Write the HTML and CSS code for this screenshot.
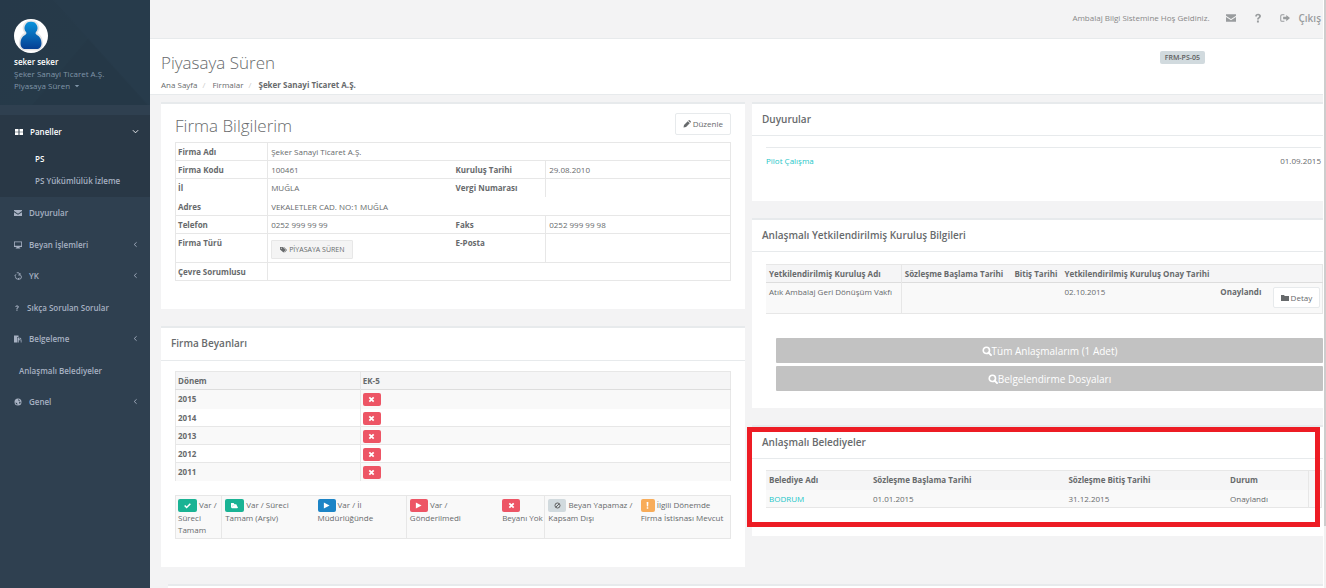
FILE: index.html
```html
<!DOCTYPE html>
<html lang="tr">
<head>
<meta charset="utf-8">
<title>Ambalaj Bilgi Sistemi - Piyasaya Süren</title>
<link rel="stylesheet" href="styles.css">
</head>
<body>
<svg class="sprite" aria-hidden="true">
  <symbol id="i-mail" viewBox="0 0 16 16"><path d="M0 2h16v2.200L8 9.500 0 4.200zM0 6.500l8 5.200 8-5.200V14H0z"/></symbol>
  <symbol id="i-help" viewBox="0 0 16 16"><path d="M3.500 5.500C3.500 2.500 5.300 1 8.200 1c2.700 0 4.600 1.600 4.600 3.900 0 3.300-3.500 3.300-3.500 5.600H6.400c0-3.500 3.300-3.700 3.300-5.400 0-.9-.6-1.500-1.600-1.500-1.200 0-1.700.8-1.800 1.900zM6.300 12h3.100v3H6.300z"/></symbol>
  <symbol id="i-out" viewBox="0 0 16 16"><path d="M7 2v1.600H3.500Q2 3.600 2 5v6q0 1.400 1.500 1.400H7V14H3Q.4 14 .4 11.400V4.600Q.4 2 3 2zM10 3l6 5-6 5v-3H5V6h5z"/></symbol>
  <symbol id="i-grid" viewBox="0 0 16 16"><path d="M0 2h7v5.500H0zM9 2h7v5.500H9zM0 8.500h7V14H0zM9 8.500h7V14H9z"/></symbol>
  <symbol id="i-screen" viewBox="0 0 16 16"><path d="M0 1h16v11h-5v1.500h1.500V15h-9v-1.500H5V12H0zM1.600 2.600v6.800h12.800V2.600z" fill-rule="evenodd"/></symbol>
  <symbol id="i-recycle" viewBox="0 0 16 16"><path d="M5.500 1.500h4l2 3.500M4 4.500 1.500 8l2 .5M8 14.500 4 13 3 9.500M9 14h4l2-4-2-4M12 2v4H8.500M10.500 11.500 8 14l2.500 1.500" fill="none" stroke="currentColor" stroke-width="1.700"/></symbol>
  <symbol id="i-paste" viewBox="0 0 16 16"><path d="M0 1h9v3H6v11H0zM7 5h4v4h4v6h-1.500v-4.500H9.500V15H7zM12 5l3 3h-3z"/></symbol>
  <symbol id="i-globe" viewBox="0 0 16 16"><path d="M8 1a7 7 0 1 0 0 14A7 7 0 0 0 8 1zM9 2.500 12 5l-2 1-2-2zM11 7l2.500 1-1.500 4-2-2zM3 9l3 1 1 3.500L4 12z" fill-rule="evenodd"/></symbol>
  <symbol id="i-left" viewBox="0 0 16 16"><path d="M10.500 3 5 8l5.500 5" fill="none" stroke="currentColor" stroke-width="2"/></symbol>
  <symbol id="i-down" viewBox="0 0 16 16"><path d="m2 5 6 6 6-6" fill="none" stroke="currentColor" stroke-width="2"/></symbol>
  <symbol id="i-caret" viewBox="0 0 16 16"><path d="M2 5h12l-6 6z"/></symbol>
  <symbol id="i-pencil" viewBox="0 0 16 16"><path d="m1 15 1-5L9.500 2.500l4 4L6 14zM10.500 1.500 12 0q1 0 2.500 1.500T16 4l-1.500 1.500z"/></symbol>
  <symbol id="i-tags" viewBox="0 0 16 16"><path d="M0 2h6l7 7-5 6-8-7zM7.500 2H9l7 7-5 6-1-1 4-5zM2 4v2h2V4z" fill-rule="evenodd"/></symbol>
  <symbol id="i-folder" viewBox="0 0 16 16"><path d="M0 2h6l1.500 2H16v10H0z"/></symbol>
  <symbol id="i-search" viewBox="0 0 16 16"><circle cx="7" cy="7" r="5" fill="none" stroke="currentColor" stroke-width="2.600"/><path d="m10.500 10.500 4 4" stroke="currentColor" stroke-width="3" stroke-linecap="round"/></symbol>
  <symbol id="i-x" viewBox="0 0 16 16"><path d="m3 3 10 10M13 3 3 13" stroke="currentColor" stroke-width="4"/></symbol>
  <symbol id="i-check" viewBox="0 0 16 16"><path d="m1.500 8 4.500 4.500L14.500 4" fill="none" stroke="currentColor" stroke-width="3.500"/></symbol>
  <symbol id="i-play" viewBox="0 0 16 16"><path d="m2 1 13 7-13 7z"/></symbol>
  <symbol id="i-open" viewBox="0 0 16 16"><path d="M0 2h6l2 3h4l4 8-2 1H2L0 12zM4 8l-1 3 2-2.500h5z" fill-rule="evenodd"/></symbol>
  <symbol id="i-ban" viewBox="0 0 16 16"><circle cx="8" cy="8" r="5.800" fill="none" stroke="currentColor" stroke-width="2.200"/><path d="m4 12 8-8" stroke="currentColor" stroke-width="2.200"/></symbol>
  <symbol id="i-bang" viewBox="0 0 16 16"><path d="M6 0h4l-.5 10h-3zM6.300 12h3.400v3.500H6.300z"/></symbol>
</svg>
<div class="app">
  <aside class="sidebar">
    <header class="profile">
      <svg class="avatar" viewBox="0 0 34 34" role="img" aria-label="Profil">
        <defs><linearGradient id="person" x1="0" y1="0" x2="0" y2="1"><stop offset="0" stop-color="#0a93dc"/><stop offset="1" stop-color="#063f93"/></linearGradient></defs>
        <circle cx="17" cy="17" r="17" fill="#fff"/>
        <path d="M17 1.500a7.500 7.500 0 0 1 6.300 12.500c4 2 5.700 6 5.700 10.500 0 4.500-3 7-6 7H11c-3 0-6-2.500-6-7C5 20 6.700 16 10.700 14A7.500 7.500 0 0 1 17 1.500z" fill="#e3e4e6"/>
        <path d="M17 2.800a6.200 6.200 0 0 1 5 10.200c-.8 1-.5 2 .6 2.700C26 17.500 27.500 20.500 27.500 24c0 4-2 6-5 6h-11c-3 0-5-2-5-6 0-3.500 1.500-6.500 4.900-8.300 1.100-.7 1.400-1.700.6-2.700A6.200 6.200 0 0 1 17 2.800z" fill="url(#person)"/>
      </svg>
      <strong class="user">seker seker</strong>
      <span>Şeker Sanayi Ticaret A.Ş.</span>
      <button class="role" type="button">Piyasaya Süren <svg class="icon tiny"><use href="#i-caret"/></svg></button>
    </header>
    <nav>
      <div class="group">
        <a class="item on" href="#paneller"><svg class="icon"><use href="#i-grid"/></svg>Paneller<svg class="icon end"><use href="#i-down"/></svg></a>
        <a class="sub on" href="#ps">PS</a>
        <a class="sub" href="#izleme">PS Yükümlülük İzleme</a>
      </div>
      <div class="menu">
        <a class="item" href="#duyurular"><svg class="icon"><use href="#i-mail"/></svg>Duyurular</a>
        <a class="item" href="#beyan"><svg class="icon"><use href="#i-screen"/></svg>Beyan İşlemleri<svg class="icon end"><use href="#i-left"/></svg></a>
        <a class="item" href="#yk"><svg class="icon"><use href="#i-recycle"/></svg>YK<svg class="icon end"><use href="#i-left"/></svg></a>
        <a class="item" href="#sss"><svg class="icon narrow"><use href="#i-help"/></svg>Sıkça Sorulan Sorular</a>
        <a class="item" href="#belgeleme"><svg class="icon"><use href="#i-paste"/></svg>Belgeleme<svg class="icon end"><use href="#i-left"/></svg></a>
        <a class="item plain" href="#belediyeler">Anlaşmalı Belediyeler</a>
        <a class="item" href="#genel"><svg class="icon"><use href="#i-globe"/></svg>Genel<svg class="icon end"><use href="#i-left"/></svg></a>
      </div>
    </nav>
  </aside>

  <div class="page">
    <div class="topbar">
      <span>Ambalaj Bilgi Sistemine Hoş Geldiniz.</span>
      <a href="#mesaj" aria-label="Mesajlar"><svg class="icon"><use href="#i-mail"/></svg></a>
      <a href="#yardim" aria-label="Yardım"><svg class="icon"><use href="#i-help"/></svg></a>
      <a class="exit" href="#cikis"><svg class="icon"><use href="#i-out"/></svg>Çıkış</a>
    </div>
    <header class="heading">
      <div>
        <h1>Piyasaya Süren</h1>
        <nav class="crumbs"><a href="#ana">Ana Sayfa</a><i>/</i><a href="#firmalar">Firmalar</a><i>/</i><strong>Şeker Sanayi Ticaret A.Ş.</strong></nav>
      </div>
      <span class="code">FRM-PS-05</span>
    </header>

    <main class="columns">
      <div class="left">
        <section class="panel company">
          <div class="title-row"><h2>Firma Bilgilerim</h2><button class="btn" type="button"><svg class="icon"><use href="#i-pencil"/></svg>Düzenle</button></div>
          <table class="info">
            <colgroup><col class="w-label"><col class="w-value"><col class="w-label"><col></colgroup>
            <tr><th>Firma Adı</th><td colspan="3">Şeker Sanayi Ticaret A.Ş.</td></tr>
            <tr><th>Firma Kodu</th><td>100461</td><th>Kuruluş Tarihi</th><td>29.08.2010</td></tr>
            <tr class="open"><th>İl</th><td>MUĞLA</td><th>Vergi Numarası</th><td></td></tr>
            <tr class="address"><th>Adres</th><td colspan="3">VEKALETLER CAD. NO:1 MUĞLA</td></tr>
            <tr><th>Telefon</th><td>0252 999 99 99</td><th>Faks</th><td>0252 999 99 98</td></tr>
            <tr><th>Firma Türü</th><td><button class="tag" type="button"><svg class="icon"><use href="#i-tags"/></svg>PİYASAYA SÜREN</button></td><th>E-Posta</th><td></td></tr>
            <tr><th>Çevre Sorumlusu</th><td colspan="3"></td></tr>
          </table>
        </section>

        <section class="panel">
          <h3>Firma Beyanları</h3>
          <div class="body declarations">
            <table class="years">
              <colgroup><col class="w-third"><col></colgroup>
              <thead><tr><th>Dönem</th><th>EK-5</th></tr></thead>
              <tbody>
                <tr><th>2015</th><td><button class="chip red" type="button" aria-label="Beyanı Yok"><svg class="icon"><use href="#i-x"/></svg></button></td></tr>
                <tr><th>2014</th><td><button class="chip red" type="button" aria-label="Beyanı Yok"><svg class="icon"><use href="#i-x"/></svg></button></td></tr>
                <tr><th>2013</th><td><button class="chip red" type="button" aria-label="Beyanı Yok"><svg class="icon"><use href="#i-x"/></svg></button></td></tr>
                <tr><th>2012</th><td><button class="chip red" type="button" aria-label="Beyanı Yok"><svg class="icon"><use href="#i-x"/></svg></button></td></tr>
                <tr><th>2011</th><td><button class="chip red" type="button" aria-label="Beyanı Yok"><svg class="icon"><use href="#i-x"/></svg></button></td></tr>
              </tbody>
            </table>
            <ul class="legend">
              <li class="line"><span class="chip wider green"><svg class="icon"><use href="#i-check"/></svg></span> Var / Süreci Tamam</li>
              <li><span class="chip wider green"><svg class="icon"><use href="#i-open"/></svg></span> Var / Süreci<br>Tamam (Arşiv)</li>
              <li class="line"><span class="chip blue"><svg class="icon"><use href="#i-play"/></svg></span> Var / İl<br>Müdürlüğünde</li>
              <li><span class="chip red"><svg class="icon"><use href="#i-play"/></svg></span> Var /<br>Gönderilmedi</li>
              <li class="line"><span class="chip red"><svg class="icon"><use href="#i-x"/></svg></span><br>Beyanı Yok</li>
              <li><span class="chip grey"><svg class="icon"><use href="#i-ban"/></svg></span> Beyan Yapamaz /<br>Kapsam Dışı</li>
              <li><span class="chip orange"><svg class="icon"><use href="#i-bang"/></svg></span> İlgili Dönemde<br>Firma İstisnası Mevcut</li>
            </ul>
          </div>
        </section>
      </div>

      <div class="right">
        <section class="panel">
          <h3>Duyurular</h3>
          <div class="body news">
            <div class="news-row"><a href="#pilot">Pilot Çalışma</a><time>01.09.2015</time></div>
          </div>
        </section>

        <section class="panel">
          <h3>Anlaşmalı Yetkilendirilmiş Kuruluş Bilgileri</h3>
          <div class="body agreements">
            <table class="list orgs">
              <colgroup><col class="w-org"><col class="w-start"><col class="w-end"><col class="w-approve"><col class="w-state"><col></colgroup>
              <thead><tr><th>Yetkilendirilmiş Kuruluş Adı</th><th>Sözleşme Başlama Tarihi</th><th>Bitiş Tarihi</th><th>Yetkilendirilmiş Kuruluş Onay Tarihi</th><th></th><th></th></tr></thead>
              <tbody><tr><td>Atık Ambalaj Geri Dönüşüm Vakfı</td><td></td><td></td><td>02.10.2015</td><td><strong>Onaylandı</strong></td><td><button class="btn" type="button"><svg class="icon"><use href="#i-folder"/></svg>Detay</button></td></tr></tbody>
            </table>
            <div class="actions">
              <button class="wide" type="button"><svg class="icon"><use href="#i-search"/></svg>Tüm Anlaşmalarım (1 Adet)</button>
              <button class="wide" type="button"><svg class="icon"><use href="#i-search"/></svg>Belgelendirme Dosyaları</button>
            </div>
          </div>
        </section>

        <section class="panel marked">
          <h3>Anlaşmalı Belediyeler</h3>
          <div class="body towns-body">
            <table class="list towns">
              <colgroup><col class="w-town"><col class="w-from"><col class="w-to"><col class="w-status"><col></colgroup>
              <thead><tr><th>Belediye Adı</th><th>Sözleşme Başlama Tarihi</th><th>Sözleşme Bitiş Tarihi</th><th>Durum</th><th></th></tr></thead>
              <tbody><tr><td><a href="#bodrum">BODRUM</a></td><td>01.01.2015</td><td>31.12.2015</td><td>Onaylandı</td><td></td></tr></tbody>
            </table>
          </div>
        </section>
      </div>
    </main>
    <footer class="foot"></footer>
  </div>
  <div class="scroll"><div class="thumb"></div></div>
</div>
</body>
</html>
```
FILE: styles.css
```css
* { box-sizing: border-box; }
body {
  margin: 0;
  font: 8px/12px "Open Sans", "Noto Sans", sans-serif;
  color: #676a6c;
  background: #f3f3f4;
}
a { color: inherit; text-decoration: none; }
button { font: inherit; color: inherit; cursor: pointer; }
h1, h2, h3, ul { margin: 0; padding: 0; }
.sprite { position: absolute; width: 0; height: 0; }
.icon { width: 8px; height: 8px; fill: currentColor; flex: none; }
.app { display: flex; height: 100vh; overflow: hidden; }

/* Sidebar */
.sidebar { width: 150px; flex: none; background: #2f4050; color: #a7b1c2; }
.profile {
  display: flex; flex-direction: column; align-items: flex-start;
  padding: 19px 14px 13px;
  color: #8095a8;
  background:
    linear-gradient(48deg, transparent 60%, #273b4b 61%),
    linear-gradient(130deg, #263949 0, #263a49 50%, #253847 51%);
}
.avatar { width: 34px; height: 34px; margin-bottom: 3px; }
.user { color: #fff; font-weight: 600; }
.role { display: flex; align-items: center; gap: 4px; border: 0; padding: 0; background: none; }
.tiny { width: 6px; height: 6px; }
.group { margin-top: 10px; padding-bottom: 5px; background: #293846; }
.item { display: flex; align-items: center; gap: 7px; height: 31px; padding: 0 11px 0 14px; font-weight: 600; }
.item.on, .sub.on { color: #fff; }
.item.on { height: 33px; padding-left: 15px; }
.item .end { width: 7px; height: 7px; margin-left: auto; }
.item.plain { padding-left: 19px; }
.narrow { width: 6px; }
.sub { display: block; padding: 5px 0 5px 35px; font-weight: 600; }
.menu .item:nth-child(odd) { margin-bottom: 1px; }

/* Top area */
.page { flex: 1; min-width: 0; display: flex; flex-direction: column; }
.topbar {
  display: flex; align-items: center; justify-content: flex-end; gap: 17px;
  height: 39px; padding: 0 2px 2px 0;
  border-bottom: 1px solid #e7eaec;
  color: #888;
}
.topbar a { display: flex; align-items: center; color: #999c9e; }
.topbar .icon { width: 10px; height: 10px; }
.topbar .exit { gap: 8px; font-size: 10px; font-weight: 600; }
.heading {
  display: flex; justify-content: space-between; align-items: flex-start;
  padding: 12px 118px 3px 11px;
  background: #fff;
  border-bottom: 1px solid #e7eaec;
}
h1, h2 { font-size: 17px; line-height: 24px; font-weight: 300; }
.crumbs { display: flex; margin-top: 4px; }
.crumbs i { width: 15px; padding-left: 5px; color: #ccc; font-style: normal; }
.code { padding: 0 5px; border-radius: 2px; background: #d1dade; color: #5e5e5e; font-size: 7px; line-height: 13px; font-weight: 600; }

/* Panels */
.columns { display: grid; grid-template-columns: 584fr 571fr; gap: 7px; padding: 7px 0 0 11px; align-items: start; }
.left, .right { display: grid; gap: 17px; min-width: 0; }
.panel { position: relative; background: #fff; border-top: 2px solid #e7eaec; }
h3 { padding: 9px 10px 10px; font-size: 10px; line-height: 13px; font-weight: 600; border-bottom: 1px solid #e7eaec; }
.right h3 { padding-bottom: 9px; }
.company { padding: 9px 14px 28px; }
.title-row { display: flex; justify-content: space-between; align-items: flex-start; margin-bottom: 5px; }
.title-row h2 { padding-top: 1px; line-height: 23px; }
.btn {
  display: inline-flex; align-items: center; gap: 2px;
  height: 22px; padding: 0 7px;
  border: 1px solid #e7eaec; border-radius: 2px; background: #fff;
}
table { width: 100%; border-collapse: collapse; table-layout: fixed; }
th, td { height: 18px; padding: 3px 3px 2px; text-align: left; vertical-align: top; white-space: nowrap; }
th { font-weight: 700; }
.w-label { width: 16.6%; }
.w-value { width: 33.5%; }
.w-third { width: 33.3%; }
.info, .info tr { border: 1px solid #e7e7e7; }
.info td { border-left: 1px solid #e7e7e7; }
.info th, .years th, .years td { padding-left: 2px; }
.info .open { border-bottom: 0; }
.info .address > * { height: 19px; padding-top: 4px; }
.info .open + tr { border-top: 0; }
.tag { display: flex; align-items: center; gap: 2px; height: 19px; margin: 3px 0 1px; padding: 0 8px; border: 1px solid #e7e7e7; border-radius: 1px; background: #f4f4f4; font-size: 7px; }
.tag .icon { width: 7px; height: 7px; }
.declarations { padding: 10px 14px 28px; }
.years { border: 1px solid #e7e7e7; border-bottom: 0; }
.years tr > * + * { border-left: 1px solid #e7e7e7; }
.years thead tr { background: #f5f5f6; border-bottom: 1px solid #ddd; }
.years tbody tr { border-bottom: 1px solid #e7e7e7; }
.years tbody tr:first-child, .years tbody tr:last-child { border-bottom: 0; }
.years tbody tr:first-child > * { height: 19px; }
.years tbody tr:nth-child(odd), .list tbody { background: #f9f9f9; }
.years tbody td { padding-bottom: 1px; }
.chip { display: inline-flex; align-items: center; justify-content: center; width: 18px; height: 13px; padding: 0; border: 0; border-radius: 2px; color: #fff; vertical-align: top; }
.chip .icon { width: 7px; height: 7px; }
.wider { width: 19px; }
.red { background: #ed5565; }
.green { background: #1ab394; }
.blue { background: #1c84c6; }
.grey { background: #d1dade; color: #5e5e5e; }
.orange { width: 14px; background: #f8ac59; }
.legend { display: grid; grid-template-columns: 1fr 2fr 2fr 2fr 1fr 2fr 2fr; margin-top: 14px; border: 1px solid #e7e7e7; background: #f9f9f9; list-style: none; }
.legend li { min-width: 0; padding: 3px 0 2px 3px; white-space: nowrap; }
.legend li:first-child { padding-left: 2px; white-space: normal; }
.legend .line { border-right: 1px solid #e7e7e7; }

/* Right column */
.news { padding: 11px 2px 27px 14px; }
.news-row { display: flex; justify-content: space-between; padding: 7px 0; border-top: 1px solid #e7eaec; }
.news a, .towns a { color: #23c6c8; }
.agreements { padding: 12px 0 17px 14px; }
.list thead { background: #f5f5f6; }
.list { border: 1px solid #e7e7e7; border-left: 0; }
.orgs thead { border-bottom: 1px solid #ddd; }
.orgs tr > :first-child { border-right: 1px solid #e7e7e7; }
.orgs .btn { height: 21px; margin: 1px 0 3px; }
.w-org { width: 24.3%; }
.w-start { width: 19.8%; }
.w-end { width: 9%; }
.w-approve { width: 28%; }
.w-state { width: 9.4%; }
.actions { display: grid; gap: 3px; margin: 24px 0 0 10px; }
.wide { display: flex; align-items: center; justify-content: center; height: 25px; border: 0; border-radius: 1px; background: #c2c2c2; color: #fff; font-size: 10px; }
.wide .icon { width: 10px; height: 10px; }
.towns-body { padding: 11px 1px 28px 14px; }
.towns thead th { height: 19px; }
.towns tr > :last-child { border-left: 1px solid #e7e7e7; }
.w-town { width: 18.7%; }
.w-from { width: 35.2%; }
.w-to { width: 29.1%; }
.w-status { width: 14.6%; }
.marked::after { content: ""; position: absolute; inset: 0 3px 9px -5px; border: 5px solid #ed1c24; pointer-events: none; }
.foot { flex: 1; margin: 17px 0 0 18px; border-top: 2px solid #e7eaec; background: #fff; }
.scroll { width: 3px; flex: none; border-left: 1px solid #fff; background: #f1f1f1; }
.thumb { height: 89.5%; background: #cdcdcd; }
```
